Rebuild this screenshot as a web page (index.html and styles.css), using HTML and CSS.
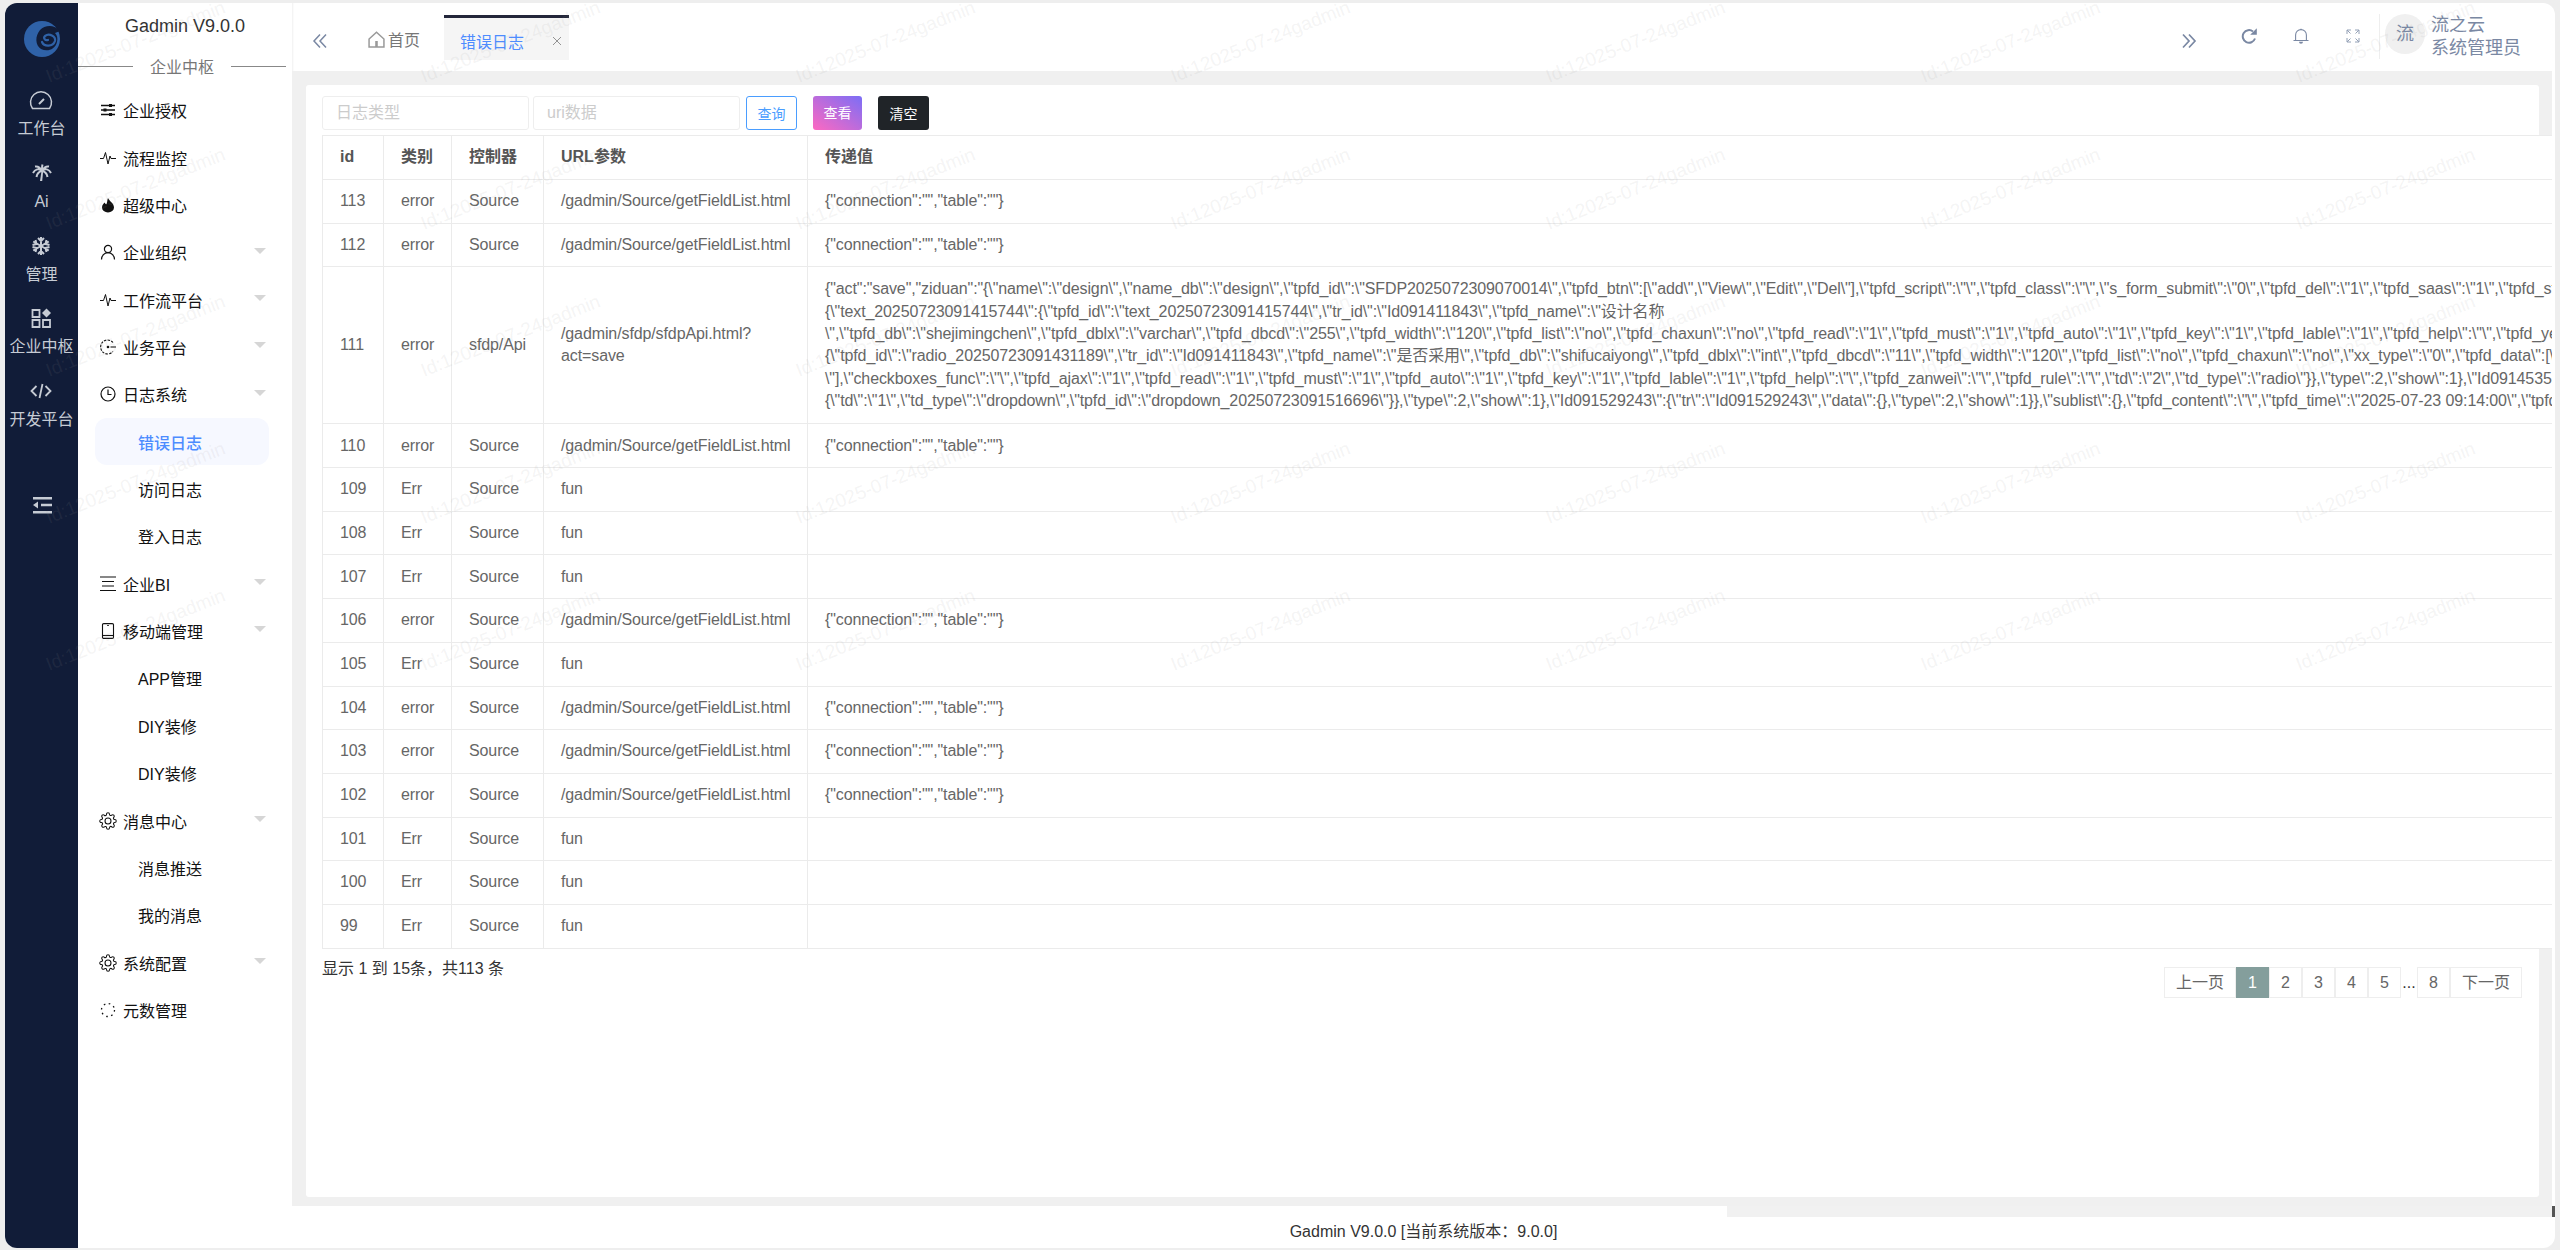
FILE: index.html
```html
<!DOCTYPE html>
<html lang="zh-CN">
<head>
    <meta charset="UTF-8">
    <title>错误日志 - Gadmin V9.0.0</title>
    <link rel="stylesheet" href="styles.css">
</head>
<body>
    <svg class="defs" width="0" height="0">
        <symbol id="i-pulse" viewBox="0 0 16 16"><path d="M0 8.500h3.500l2-6 2.500 11.500 2-8 1 2.500h5" fill="none" stroke="currentColor" stroke-width="1"/></symbol>
        <symbol id="i-gear" viewBox="0 0 24 24"><circle cx="12" cy="12" r="4" fill="none" stroke="currentColor" stroke-width="1.4"/><path fill="none" stroke="currentColor" stroke-width="1.4" d="M19.4 15a1.65 1.65 0 0 0 .33 1.82l.06.06a2 2 0 0 1 0 2.83 2 2 0 0 1-2.83 0l-.06-.06a1.65 1.65 0 0 0-1.82-.33 1.65 1.65 0 0 0-1 1.51V21a2 2 0 0 1-2 2 2 2 0 0 1-2-2v-.09A1.65 1.65 0 0 0 9 19.4a1.65 1.65 0 0 0-1.82.33l-.06.06a2 2 0 0 1-2.83 0 2 2 0 0 1 0-2.83l.06-.06a1.65 1.65 0 0 0 .33-1.82 1.65 1.65 0 0 0-1.51-1H3a2 2 0 0 1-2-2 2 2 0 0 1 2-2h.09A1.65 1.65 0 0 0 4.6 9a1.65 1.65 0 0 0-.33-1.82l-.06-.06a2 2 0 0 1 0-2.83 2 2 0 0 1 2.83 0l.06.06a1.65 1.65 0 0 0 1.82.33H9a1.65 1.65 0 0 0 1-1.51V3a2 2 0 0 1 2-2 2 2 0 0 1 2 2v.09a1.65 1.65 0 0 0 1 1.51 1.65 1.65 0 0 0 1.82-.33l.06-.06a2 2 0 0 1 2.83 0 2 2 0 0 1 0 2.83l-.06.06a1.65 1.65 0 0 0-.33 1.82V9a1.65 1.65 0 0 0 1.51 1H21a2 2 0 0 1 2 2 2 2 0 0 1-2 2h-.09a1.65 1.65 0 0 0-1.51 1z"/></symbol>
    </svg>

    <div class="app">
        <nav class="rail">
            <div class="rail-logo">
                <svg width="36" height="36" viewBox="0 0 36 36"><circle cx="18" cy="18" r="18" fill="#2f62a8"/><path d="M36 10C30 3 21 4 16 9 11 15 11 24 17 28c6 3 14 1 16-7 1-4 0-7-2-9l5-2z" fill="#111c38"/><path d="M18 21c2 5 11 5 13-1 1-5-6-8-10-5-2 2 0 5 3 4" fill="none" stroke="#2f62a8" stroke-width="2.2" stroke-linecap="round"/></svg>
            </div>
            <a class="rail-item">
                <svg class="rail-icon" viewBox="0 0 24 24"><path d="M3.500 20.500a10.500 10.500 0 1 1 17 0z" fill="none" stroke="currentColor" stroke-width="1.500"/><path d="M10 16l5-5" stroke="currentColor" stroke-width="2"/></svg>
                <span>工作台</span>
            </a>
            <a class="rail-item">
                <svg class="rail-icon" viewBox="0 0 24 24"><path d="M12 10C9 7 5 8 3 12M12 10C10 6 8 5 5 5.500M12 10c0-3 0-5 .5-6.500M12 10c2-4 4-5 7-4.500M12 10c3-3 7-2 9 2M12 10c-3 .5-5 2.500-5.500 6M12 10c3 .5 5 2.500 5.500 6" fill="none" stroke="currentColor" stroke-width="2"/><path d="M11.500 10l-1.500 10h2.200l1-10z" fill="currentColor"/></svg>
                <span>Ai</span>
            </a>
            <a class="rail-item">
                <svg class="rail-icon" viewBox="0 0 24 24"><path d="M12 3v18M4.200 7.500l15.600 9M19.800 7.500l-15.600 9M9 4l3 3 3-3M9 20l3-3 3 3M3.500 11l4-1-1-4M20.500 13l-4 1 1 4M20.500 11l-4-1 1-4M3.500 13l4 1-1 4" fill="none" stroke="currentColor" stroke-width="2"/></svg>
                <span>管理</span>
            </a>
            <a class="rail-item">
                <svg class="rail-icon" viewBox="0 0 24 24"><path d="M3.500 4h7v7h-7zM3.500 14h7v7h-7zM14 14h7v7h-7z" fill="none" stroke="currentColor" stroke-width="1.800"/><path d="M17.500 2.500l4.500 4.500-4.500 4.500L13 7z" fill="currentColor"/></svg>
                <span>企业中枢</span>
            </a>
            <a class="rail-item">
                <svg class="rail-icon" viewBox="0 0 24 24"><path d="M7.500 7L2.500 12l5 5M16.500 7l5 5-5 5M13.500 5l-3 14" fill="none" stroke="currentColor" stroke-width="1.800"/></svg>
                <span>开发平台</span>
            </a>
            <svg class="rail-icon rail-collapse" viewBox="0 0 24 24"><path d="M3 4h19v2.600H3zM11 10.700h11v2.600H11zM3 18h19v2.600H3z" fill="currentColor"/><path d="M3 12l5-3.500v7z" fill="currentColor"/></svg>
        </nav>

        <aside class="side">
            <h1 class="side-title">Gadmin V9.0.0</h1>
            <div class="side-divider"><span>企业中枢</span></div>
            <ul class="menu">
                <li class="menu-item">
                    <svg class="menu-icon" viewBox="0 0 16 16"><path d="M1 3.500h14M1 8h14M1 12.500h14" stroke="currentColor" stroke-width="1.300"/><path d="M9 2h3v3H9zM3.500 6.500h3v3h-3zM9 11h3v3H9z" fill="currentColor"/></svg>
                    <span>企业授权</span>
                </li>
                <li class="menu-item"><svg class="menu-icon"><use href="#i-pulse"/></svg><span>流程监控</span></li>
                <li class="menu-item">
                    <svg class="menu-icon" viewBox="0 0 16 16"><path d="M8 1c1 3 6 5 6 9.500A6 5 0 0 1 2 10.500C2 8 3.500 6.500 5 5.500 5 7 6 7.500 6.500 7 7.500 5 7 3 8 1z" fill="currentColor"/></svg>
                    <span>超级中心</span>
                </li>
                <li class="menu-item has-sub">
                    <svg class="menu-icon" viewBox="0 0 16 16"><circle cx="8" cy="5" r="3.600" fill="none" stroke="currentColor" stroke-width="1.200"/><path d="M1.500 15.500c0-4 3-6.800 6.500-6.800s6.500 2.800 6.500 6.800" fill="none" stroke="currentColor" stroke-width="1.200"/></svg>
                    <span>企业组织</span>
                </li>
                <li class="menu-item has-sub"><svg class="menu-icon"><use href="#i-pulse"/></svg><span>工作流平台</span></li>
                <li class="menu-item has-sub">
                    <svg class="menu-icon" viewBox="0 0 16 16"><path d="M13 3.500A7 7 0 1 0 13 12.500" fill="none" stroke="currentColor" stroke-width="1.100" stroke-dasharray="2.400 1.200"/><circle cx="8" cy="8" r="1.300" fill="currentColor"/><path d="M10.500 8H16" stroke="currentColor" stroke-width="1.100"/></svg>
                    <span>业务平台</span>
                </li>
                <li class="menu-item has-sub">
                    <svg class="menu-icon" viewBox="0 0 16 16"><circle cx="8" cy="8" r="7" fill="none" stroke="currentColor" stroke-width="1.200"/><path d="M8 3.500V8.500h3.500" fill="none" stroke="currentColor" stroke-width="1.200"/></svg>
                    <span>日志系统</span>
                </li>
                <li class="menu-item sub active"><span>错误日志</span></li>
                <li class="menu-item sub"><span>访问日志</span></li>
                <li class="menu-item sub"><span>登入日志</span></li>
                <li class="menu-item has-sub">
                    <svg class="menu-icon wide" viewBox="0 0 18 16"><path d="M1 1h16M3 5.500h12M3 10h12M1 14.500h16" stroke="currentColor" stroke-width="1.200"/></svg>
                    <span>企业BI</span>
                </li>
                <li class="menu-item has-sub">
                    <svg class="menu-icon" viewBox="0 0 16 16"><rect x="2.500" y=".6" width="11" height="14.800" rx="1.200" fill="none" stroke="currentColor" stroke-width="1.100"/><path d="M2.500 12.500h11" stroke="currentColor" stroke-width="1.100"/><path d="M7 2.500h2" stroke="currentColor" stroke-width=".8"/></svg>
                    <span>移动端管理</span>
                </li>
                <li class="menu-item sub"><span>APP管理</span></li>
                <li class="menu-item sub"><span>DIY装修</span></li>
                <li class="menu-item sub"><span>DIY装修</span></li>
                <li class="menu-item has-sub"><svg class="menu-icon wide"><use href="#i-gear"/></svg><span>消息中心</span></li>
                <li class="menu-item sub"><span>消息推送</span></li>
                <li class="menu-item sub"><span>我的消息</span></li>
                <li class="menu-item has-sub"><svg class="menu-icon wide"><use href="#i-gear"/></svg><span>系统配置</span></li>
                <li class="menu-item">
                    <svg class="menu-icon" viewBox="0 0 16 16"><circle cx="8" cy="8" r="6.500" fill="none" stroke="currentColor" stroke-width="1.300" stroke-dasharray="1.600 3.500"/></svg>
                    <span>元数管理</span>
                </li>
            </ul>
        </aside>

        <div class="main">
            <header class="topbar">
                <svg class="fold" viewBox="0 0 16 16"><path d="M8 1.500L2 8l6 6.500M14 1.500L8 8l6 6.500" fill="none" stroke="currentColor" stroke-width="1.500"/></svg>
                <a class="tab">
                    <svg class="tab-home" viewBox="0 0 16 16"><path d="M1 7.500L8 1.200l7 6.300V15H1z" fill="none" stroke="currentColor" stroke-width="1.400"/><path d="M6.800 9.500h2.400V15H6.800z" fill="currentColor"/></svg>
                    <span>首页</span>
                </a>
                <a class="tab tab-active">
                    <span>错误日志</span>
                    <svg class="tab-close" viewBox="0 0 10 10"><path d="M1 1l8 8M9 1l-8 8" stroke="currentColor" stroke-width=".9"/></svg>
                </a>
                <div class="top-tools">
                    <svg class="fold fold-right" viewBox="0 0 16 16"><path d="M2 1.500L8 8l-6 6.500M8 1.500L14 8l-6 6.500" fill="none" stroke="currentColor" stroke-width="1.700"/></svg>
                    <span class="tool">
                        <svg viewBox="0 0 16 16"><path d="M14 10.500a6.300 6.300 0 1 1-2-7" fill="none" stroke="currentColor" stroke-width="2"/><path d="M15.800 .2v6.600H9.200z" fill="currentColor"/></svg>
                    </span>
                    <span class="tool">
                        <svg viewBox="0 0 16 16"><path d="M2.600 12.500V7a5.400 5.400 0 0 1 10.800 0v5.500M.5 12.500h15" fill="none" stroke="currentColor" stroke-width="1.100"/><path d="M6 13.800h4a2 2 0 0 1-4 0zM7.400 .8h1.200V2H7.400z" fill="currentColor"/></svg>
                    </span>
                    <span class="tool tool-full">
                        <svg viewBox="0 0 16 16"><path d="M2 6V2h4M2 2l3.500 3.500M14 6V2h-4M14 2l-3.500 3.500M2 10v4h4M2 14l3.500-3.500M14 10v4h-4M14 14l-3.500-3.500" fill="none" stroke="currentColor" stroke-width="1"/></svg>
                    </span>
                    <div class="user">
                        <span class="avatar">流</span>
                        <div class="user-name">流之云<br>系统管理员</div>
                    </div>
                </div>
            </header>

            <section class="content">
                <div class="card">
                    <form class="filters">
                        <input class="filter-input" type="text" placeholder="日志类型">
                        <input class="filter-input" type="text" placeholder="uri数据">
                        <button type="button" class="btn btn-query">查询</button>
                        <button type="button" class="btn btn-view">查看</button>
                        <button type="button" class="btn btn-clear">清空</button>
                    </form>
                    <table class="log-table">
                        <colgroup>
                            <col class="col-id"><col class="col-type"><col class="col-ctrl"><col class="col-url"><col>
                        </colgroup>
                        <thead>
                            <tr><th>id</th><th>类别</th><th>控制器</th><th>URL参数</th><th>传递值</th></tr>
                        </thead>
                        <tbody>
                            <tr><td>113</td><td>error</td><td>Source</td><td>/gadmin/Source/getFieldList.html</td><td>{"connection":"","table":""}</td></tr>
                            <tr><td>112</td><td>error</td><td>Source</td><td>/gadmin/Source/getFieldList.html</td><td>{"connection":"","table":""}</td></tr>
                            <tr class="row-long">
                                <td>111</td><td>error</td><td>sfdp/Api</td><td>/gadmin/sfdp/sfdpApi.html?<br>act=save</td>
                                <td>{"act":"save","ziduan":"{\"name\":\"design\",\"name_db\":\"design\",\"tpfd_id\":\"SFDP2025072309070014\",\"tpfd_btn\":[\"add\",\"View\",\"Edit\",\"Del\"],\"tpfd_script\":\"\",\"tpfd_class\":\"\",\"s_form_submit\":\"0\",\"tpfd_del\":\"1\",\"tpfd_saas\":\"1\",\"tpfd_status\":\"0\"<br>{\"text_20250723091415744\":{\"tpfd_id\":\"text_20250723091415744\",\"tr_id\":\"Id091411843\",\"tpfd_name\":\"设计名称<br>\",\"tpfd_db\":\"shejimingchen\",\"tpfd_dblx\":\"varchar\",\"tpfd_dbcd\":\"255\",\"tpfd_width\":\"120\",\"tpfd_list\":\"no\",\"tpfd_chaxun\":\"no\",\"tpfd_read\":\"1\",\"tpfd_must\":\"1\",\"tpfd_auto\":\"1\",\"tpfd_key\":\"1\",\"tpfd_lable\":\"1\",\"tpfd_help\":\"\",\"tpfd_yes\":\"\"<br>{\"tpfd_id\":\"radio_20250723091431189\",\"tr_id\":\"Id091411843\",\"tpfd_name\":\"是否采用\",\"tpfd_db\":\"shifucaiyong\",\"tpfd_dblx\":\"int\",\"tpfd_dbcd\":\"11\",\"tpfd_width\":\"120\",\"tpfd_list\":\"no\",\"tpfd_chaxun\":\"no\",\"xx_type\":\"0\",\"tpfd_data\":[\"是\"<br>\"],\"checkboxes_func\":\"\",\"tpfd_ajax\":\"1\",\"tpfd_read\":\"1\",\"tpfd_must\":\"1\",\"tpfd_auto\":\"1\",\"tpfd_key\":\"1\",\"tpfd_lable\":\"1\",\"tpfd_help\":\"\",\"tpfd_zanwei\":\"\",\"tpfd_rule\":\"\",\"td\":\"2\",\"td_type\":\"radio\"}},\"type\":2,\"show\":1},\"Id091453535\"<br>{\"td\":\"1\",\"td_type\":\"dropdown\",\"tpfd_id\":\"dropdown_20250723091516696\"}},\"type\":2,\"show\":1},\"Id091529243\":{\"tr\":\"Id091529243\",\"data\":{},\"type\":2,\"show\":1}},\"sublist\":{},\"tpfd_content\":\"\",\"tpfd_time\":\"2025-07-23 09:14:00\",\"tpfd_user\":\"\"</td>
                            </tr>
                            <tr><td>110</td><td>error</td><td>Source</td><td>/gadmin/Source/getFieldList.html</td><td>{"connection":"","table":""}</td></tr>
                            <tr><td>109</td><td>Err</td><td>Source</td><td>fun</td><td></td></tr>
                            <tr><td>108</td><td>Err</td><td>Source</td><td>fun</td><td></td></tr>
                            <tr><td>107</td><td>Err</td><td>Source</td><td>fun</td><td></td></tr>
                            <tr><td>106</td><td>error</td><td>Source</td><td>/gadmin/Source/getFieldList.html</td><td>{"connection":"","table":""}</td></tr>
                            <tr><td>105</td><td>Err</td><td>Source</td><td>fun</td><td></td></tr>
                            <tr><td>104</td><td>error</td><td>Source</td><td>/gadmin/Source/getFieldList.html</td><td>{"connection":"","table":""}</td></tr>
                            <tr><td>103</td><td>error</td><td>Source</td><td>/gadmin/Source/getFieldList.html</td><td>{"connection":"","table":""}</td></tr>
                            <tr><td>102</td><td>error</td><td>Source</td><td>/gadmin/Source/getFieldList.html</td><td>{"connection":"","table":""}</td></tr>
                            <tr><td>101</td><td>Err</td><td>Source</td><td>fun</td><td></td></tr>
                            <tr><td>100</td><td>Err</td><td>Source</td><td>fun</td><td></td></tr>
                            <tr><td>99</td><td>Err</td><td>Source</td><td>fun</td><td></td></tr>
                        </tbody>
                    </table>
                    <div class="table-foot">
                        <div class="table-info">显示 1 到 15条，共113 条</div>
                        <div class="pager">
                            <a class="page page-wide">上一页</a>
                            <a class="page page-on">1</a>
                            <a class="page">2</a>
                            <a class="page">3</a>
                            <a class="page">4</a>
                            <a class="page">5</a>
                            <span class="page-gap">...</span>
                            <a class="page">8</a>
                            <a class="page page-wide">下一页</a>
                        </div>
                    </div>
                </div>
            </section>

            <div class="hbar"><span class="hbar-thumb"></span><span class="hbar-track"></span><span class="hbar-end"></span></div>
            <footer class="footer">Gadmin V9.0.0 [当前系统版本：9.0.0]</footer>
        </div>
    </div>

    <div class="watermark">
        <span>Id:12025-07-24gadmin</span><span>Id:12025-07-24gadmin</span><span>Id:12025-07-24gadmin</span><span>Id:12025-07-24gadmin</span><span>Id:12025-07-24gadmin</span><span>Id:12025-07-24gadmin</span><span>Id:12025-07-24gadmin</span>
        <span>Id:12025-07-24gadmin</span><span>Id:12025-07-24gadmin</span><span>Id:12025-07-24gadmin</span><span>Id:12025-07-24gadmin</span><span>Id:12025-07-24gadmin</span><span>Id:12025-07-24gadmin</span><span>Id:12025-07-24gadmin</span>
        <span>Id:12025-07-24gadmin</span><span>Id:12025-07-24gadmin</span><span>Id:12025-07-24gadmin</span><span>Id:12025-07-24gadmin</span><span>Id:12025-07-24gadmin</span><span>Id:12025-07-24gadmin</span><span>Id:12025-07-24gadmin</span>
        <span>Id:12025-07-24gadmin</span><span>Id:12025-07-24gadmin</span><span>Id:12025-07-24gadmin</span><span>Id:12025-07-24gadmin</span><span>Id:12025-07-24gadmin</span><span>Id:12025-07-24gadmin</span><span>Id:12025-07-24gadmin</span>
        <span>Id:12025-07-24gadmin</span><span>Id:12025-07-24gadmin</span><span>Id:12025-07-24gadmin</span><span>Id:12025-07-24gadmin</span><span>Id:12025-07-24gadmin</span><span>Id:12025-07-24gadmin</span><span>Id:12025-07-24gadmin</span>
    </div>
</body>
</html>
```

FILE: styles.css
```css
:root {
    --rail-bg: #111c38;
    --line: #ebebeb;
    --page-bg: #f0f0f0;
    --blue: #4d8cff;
    --tool: #7a88a3;
}

* {
    margin: 0;
    padding: 0;
    box-sizing: border-box;
    font-family: "Liberation Sans", "Noto Sans CJK SC", sans-serif;
}

html, body {
    height: 100%;
}

body {
    position: relative;
    height: 1250px;
    padding: 3px 5px 2px;
    background: #eeeeee;
    overflow: hidden;
    font-size: 16px;
}

.defs {
    position: absolute;
}

a {
    color: inherit;
    text-decoration: none;
}

ul {
    list-style: none;
}

.app {
    display: flex;
    height: 100%;
    background: #fff;
    border-radius: 12px;
    overflow: hidden;
}

/* dark left rail */
.rail {
    flex: 0 0 73px;
    background: var(--rail-bg);
    color: #c6cbd4;
    display: flex;
    flex-direction: column;
    align-items: center;
}

.rail-logo {
    height: 79px;
    padding-top: 18px;
}

.rail-item {
    height: 72.8px;
    padding-top: 6px;
    display: flex;
    flex-direction: column;
    align-items: center;
    gap: 6px;
    line-height: 22px;
    white-space: nowrap;
}

.rail-icon {
    width: 24px;
    height: 24px;
}

.rail-collapse {
    margin-top: 47px;
}

/* second column, menu */
.side {
    flex: 0 0 214px;
    background: #fff;
}

.side-title {
    height: 46px;
    padding-top: 12px;
    font-size: 18px;
    font-weight: normal;
    line-height: 22px;
    text-align: center;
    color: #333;
}

.side-divider {
    display: flex;
    align-items: center;
    gap: 17px;
    padding-right: 6px;
    height: 34px;
    margin-bottom: 3.5px;
    color: #777;
}

.side-divider::before,
.side-divider::after {
    content: '';
    flex: 1;
    border-top: 1px solid #888;
}

.menu-item {
    position: relative;
    display: flex;
    align-items: center;
    gap: 7px;
    height: 47.37px;
    padding-left: 22px;
    color: #111;
}

.menu-icon {
    flex: 0 0 16px;
    width: 16px;
    height: 16px;
}

.menu-icon.wide {
    flex-basis: 18px;
    width: 18px;
    height: 18px;
    margin: 0 -1px;
}

.has-sub::after {
    content: '';
    position: absolute;
    left: 176px;
    top: 19px;
    border: 6px solid transparent;
    border-top: 6px solid #d6d6d6;
    border-bottom: 0;
}

.menu-item.sub {
    padding-left: 60px;
}

.menu-item.active {
    margin-left: 17px;
    width: 174px;
    padding-left: 43px;
    color: var(--blue);
    background: #f6f8ff;
    border-radius: 12px;
    font-weight: 500;
}

/* main column */
.main {
    flex: 1;
    min-width: 0;
    display: flex;
    flex-direction: column;
}

.topbar {
    flex: 0 0 68px;
    display: flex;
    align-items: flex-start;
    padding-left: 20px;
    color: var(--tool);
    box-shadow: inset 2px 0 2px -1px #f0f0f0;
}

.fold {
    flex: 0 0 16px;
    width: 16px;
    height: 16px;
    margin-top: 30px;
}

.tab {
    display: flex;
    align-items: center;
    height: 45px;
    margin-top: 12px;
    padding: 3px 0 0;
    color: #777;
}

.tab:first-of-type {
    margin-left: 40px;
    width: 76px;
    gap: 3px;
}

.tab-home {
    width: 17px;
    height: 17px;
    color: #999;
}

.tab-active {
    width: 125px;
    padding-left: 16px;
    color: var(--blue);
    background: #f5f5f5;
    border-top: 3px solid #23263a;
}

.tab-close {
    width: 10px;
    height: 10px;
    margin-left: 28px;
    color: #888;
}

.top-tools {
    margin-left: auto;
    display: flex;
    align-items: flex-start;
    padding-right: 34px;
}

.fold-right {
    margin-top: 30px;
    margin-right: 26px;
}

.tool {
    flex: 0 0 52px;
    height: 16px;
    margin-top: 25px;
    display: flex;
    justify-content: center;
}

.tool svg {
    width: 16px;
    height: 16px;
}

.tool-full {
    color: #93a0b6;
}

.user {
    display: flex;
    align-items: flex-start;
    gap: 6px;
    height: 45px;
    margin-top: 11px;
    padding-left: 5px;
    border-left: 1px solid #eeeeee;
    color: var(--tool);
}

.avatar {
    width: 40px;
    height: 40px;
    border-radius: 50%;
    background: #f0f0f0;
    text-align: center;
    font-size: 18px;
    line-height: 40px;
}

.user-name {
    font-size: 18px;
    line-height: 22.5px;
}

.content {
    flex: 1;
    min-height: 0;
    margin-right: 3px;
    padding: 14px 13px 9px 14px;
    background: var(--page-bg);
    overflow: hidden;
}

.card {
    height: 100%;
    padding: 11px 17px 0 16px;
    background: #fff;
    border-radius: 3px;
}

.filters {
    display: flex;
    align-items: stretch;
    height: 34px;
    margin-bottom: 5px;
}

.filter-input {
    width: 207px;
    margin-right: 4px;
    padding-left: 13px;
    border: 1px solid #eeeeee;
    border-radius: 3px;
    font-size: 16px;
    outline: none;
}

.filter-input::placeholder {
    color: #cccccc;
}

.btn {
    height: 34px;
    border: none;
    border-radius: 3px;
    font-size: 14px;
    color: #fff;
}

.btn-query {
    width: 51px;
    margin-left: 2px;
    background: #fff;
    border: 1px solid #4a9dff;
    color: #4a9dff;
}

.btn-view {
    width: 49px;
    margin-left: 16px;
    padding-bottom: 3px;
    background: linear-gradient(to top right, #fd69c1, #7b6ef6);
}

.btn-clear {
    width: 51px;
    margin-left: 16px;
    background: #202428;
}

/* log table, wider than the card on purpose */
.log-table {
    width: 2400px;
    table-layout: fixed;
    border-collapse: collapse;
    background: #fff;
    font-size: 16px;
    line-height: 22.4px;
    color: #666;
}

.col-id { width: 61px; }
.col-type { width: 68px; }
.col-ctrl { width: 92px; }
.col-url { width: 264px; }

.log-table th,
.log-table td {
    height: 43.7px;
    padding: 0 17px;
    border: 1px solid var(--line);
    text-align: left;
    white-space: nowrap;
}

.log-table td {
    letter-spacing: -0.11px;
}

.log-table th {
    height: 44px;
    font-weight: bold;
    color: #555;
}

.row-long td {
    height: 157px;
}

.table-foot {
    display: flex;
    justify-content: space-between;
    align-items: flex-start;
}

.table-info {
    margin-top: 9px;
    color: #333;
    line-height: 22.4px;
}

.pager {
    display: flex;
    margin-top: 18px;
    color: #666;
}

.page {
    width: 33px;
    height: 31px;
    border: 1px solid #eeeeee;
    text-align: center;
    line-height: 29px;
}

.page-wide {
    width: 72px;
}

.page-on {
    background: #849e9c;
    border-color: #849e9c;
    color: #fff;
}

.page-gap {
    width: 16px;
    padding-top: 3px;
    line-height: 26px;
    text-align: center;
    color: #333;
}

.hbar {
    flex: 0 0 11px;
    display: flex;
}

.hbar-thumb {
    flex: 0 0 1435px;
    background: #fff;
}

.hbar-track {
    flex: 1;
    background: #f1f1f1;
}

.hbar-end {
    flex: 0 0 3px;
    background: #555;
}

.footer {
    flex: 0 0 31px;
    text-align: center;
    line-height: 30px;
    color: #333;
}

/* repeated id text over the whole page */
.watermark {
    position: absolute;
    left: -52px;
    top: -32px;
    display: grid;
    grid-template-columns: repeat(7, 375px);
    grid-auto-rows: 147px;
    pointer-events: none;
}

.watermark span {
    place-self: center;
    transform: rotate(-21.7deg);
    white-space: nowrap;
    font-size: 19px;
    color: rgba(150, 150, 150, 0.11);
}
```
